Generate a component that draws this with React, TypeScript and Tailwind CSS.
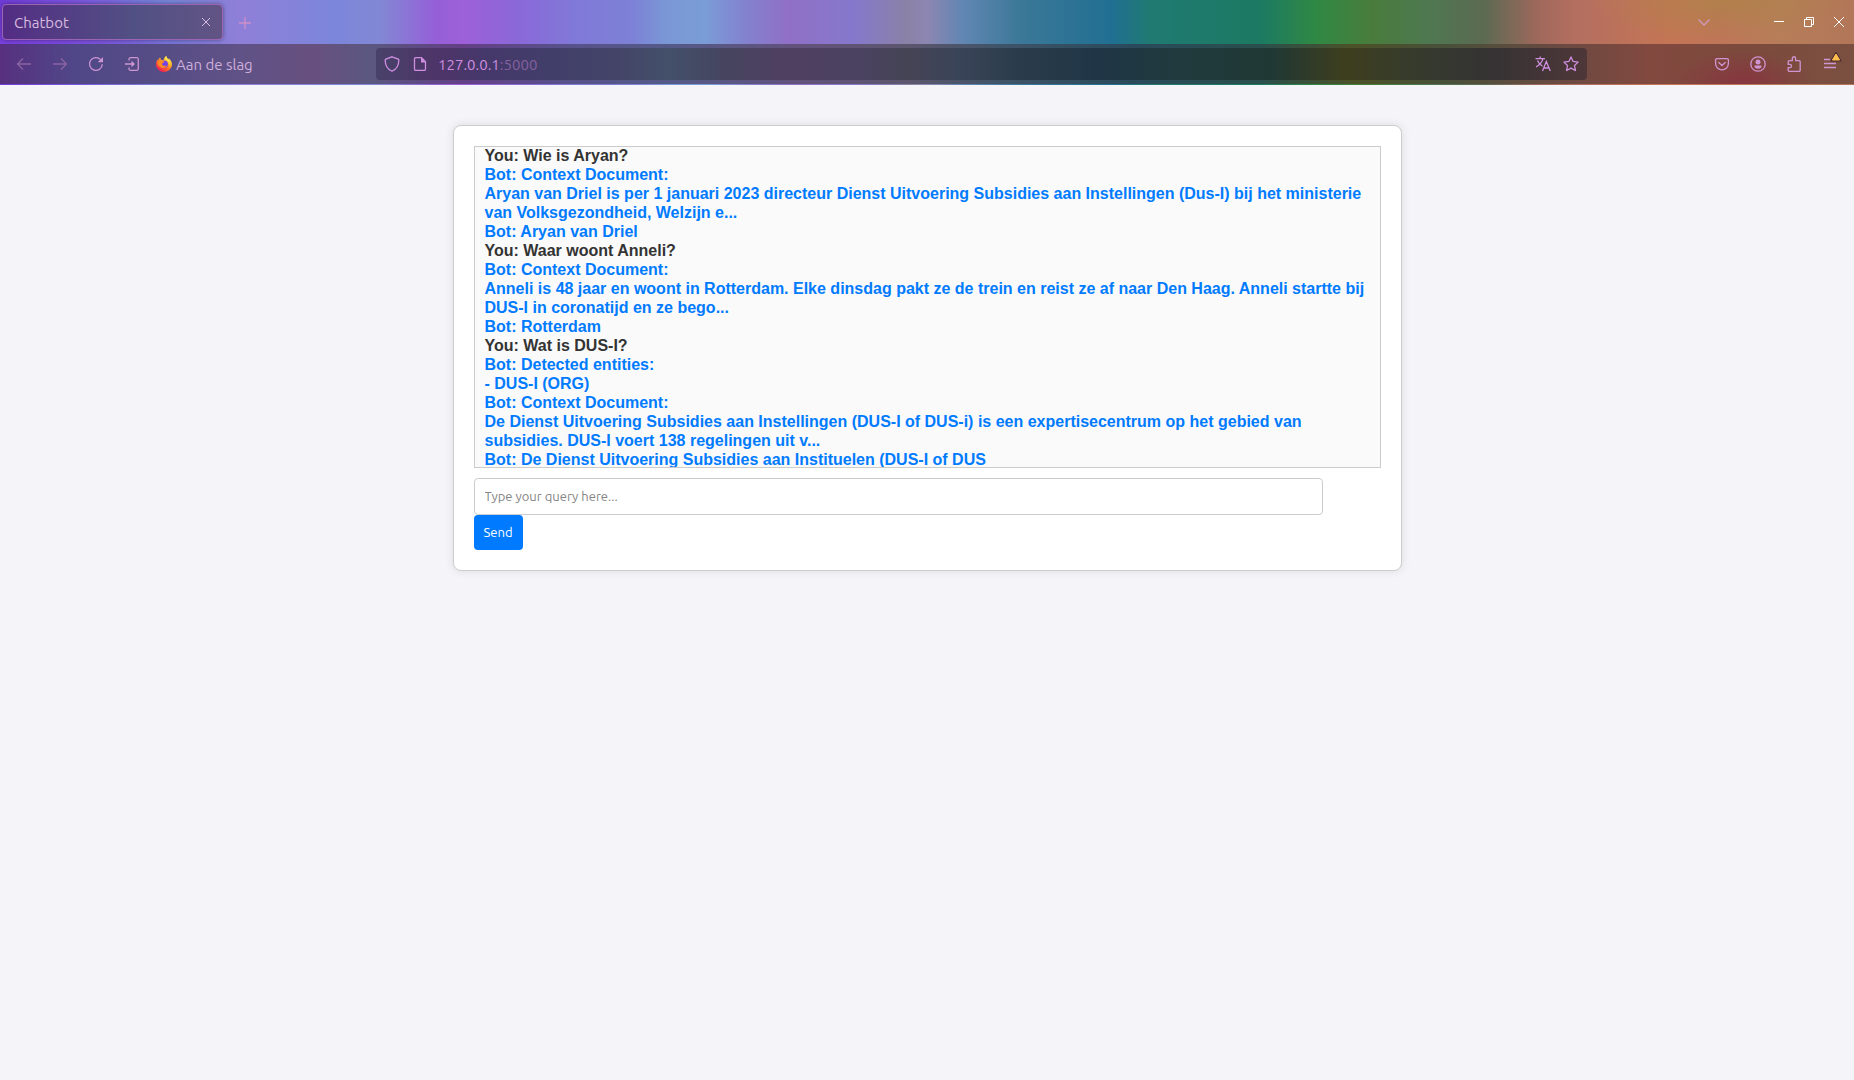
import { useState } from "react";
import type { ReactNode } from "react";

type Message = { from: "user" | "bot"; lines: string[] };

const messages: Message[] = [
  { from: "user", lines: ["You: Wie is Aryan?"] },
  {
    from: "bot",
    lines: [
      "Bot: Context Document:",
      "Aryan van Driel is per 1 januari 2023 directeur Dienst Uitvoering Subsidies aan Instellingen (Dus-I) bij het ministerie van Volksgezondheid, Welzijn e...",
    ],
  },
  { from: "bot", lines: ["Bot: Aryan van Driel"] },
  { from: "user", lines: ["You: Waar woont Anneli?"] },
  {
    from: "bot",
    lines: [
      "Bot: Context Document:",
      "Anneli is 48 jaar en woont in Rotterdam. Elke dinsdag pakt ze de trein en reist ze af naar Den Haag. Anneli startte bij DUS-I in coronatijd en ze bego...",
    ],
  },
  { from: "bot", lines: ["Bot: Rotterdam"] },
  { from: "user", lines: ["You: Wat is DUS-I?"] },
  { from: "bot", lines: ["Bot: Detected entities:", "- DUS-I (ORG)"] },
  {
    from: "bot",
    lines: [
      "Bot: Context Document:",
      "De Dienst Uitvoering Subsidies aan Instellingen (DUS-I of DUS-i) is een expertisecentrum op het gebied van subsidies. DUS-I voert 138 regelingen uit v...",
    ],
  },
  { from: "bot", lines: ["Bot: De Dienst Uitvoering Subsidies aan Instituelen (DUS-I of DUS"] },
];

function Icon({ children, className = "" }: { children: ReactNode; className?: string }) {
  return (
    <svg viewBox="0 0 16 16" fill="none" stroke="currentColor" strokeWidth="1.3" className={`size-4 shrink-0 ${className}`} aria-hidden="true">
      {children}
    </svg>
  );
}

function BarButton({ label, children, className = "w-9 text-[#cf95d2]" }: { label: string; children: ReactNode; className?: string }) {
  return (
    <button type="button" aria-label={label} className={`flex h-8 shrink-0 items-center justify-center ${className}`}>
      {children}
    </button>
  );
}

function FirefoxLogo() {
  return (
    <svg viewBox="0 0 16 16" className="size-4 shrink-0" aria-hidden="true">
      <defs>
        <linearGradient id="flame" x1="0.85" y1="0.05" x2="0.2" y2="0.95">
          <stop offset="0" stopColor="#fff44f" />
          <stop offset="0.35" stopColor="#ffb02a" />
          <stop offset="0.6" stopColor="#ff6a2a" />
          <stop offset="1" stopColor="#f0145c" />
        </linearGradient>
      </defs>
      <path d="M10.2 0c.3 1.600 1.200 2.300 2.300 3.400.2-.4.200-.8.100-1.200C14.600 3.500 16 6 16 8.500A7.900 7.500 0 0 1 8 16 7.900 7.600 0 0 1 0 8.400C0 6.500.8 4.600 1.800 3.300c0 .5.100.8.300 1.100C2.500 3 3.200 2 4.400 1.500c-.2 1.200.3 1.900.9 2.400h2.200C8 2.400 8.800.8 10.200 0z" fill="url(#flame)" />
      <circle cx="8.200" cy="8.300" r="3.700" fill="#7542e5" />
      <path d="M1.500 7c1-2.600 3.500-3 5.200-1.900l1.700.3c-.2 1.100-1.700 1.300-2.200 2.100-.3.900.2 1.900 1.400 2.300 1.300.4 2.200-.5 3.200-.2-.6 1.700-2.200 2.500-4 2.300C4.200 11.600 2 10 1.500 7z" fill="#ff8a24" />
      <path d="M10.200 0c.3 1.600 1.200 2.300 2.300 3.400 1.500 1.700 1.800 3.500 1.200 5.300-.4-2.400-1.700-3.900-3.700-4.700-1.400-.6-1.200-2.700.2-4z" fill="#ffe14b" />
    </svg>
  );
}

function TabStrip() {
  return (
    <div className="flex h-11 items-start bg-[radial-gradient(130px_45px_at_93%_0%,#ac8446bb,transparent),radial-gradient(200px_50px_at_2%_100%,#7f43e0aa,transparent)] pt-1 pl-0.5">
      <div className="flex h-9 w-[221px] items-center justify-between rounded border border-[#9b63b4] bg-linear-to-r from-[#532c84] via-[#515084] via-60% to-[#625485] pr-2 pl-[11px] text-[#d9bbdf] shadow-[0_0_4px_rgba(0,0,0,0.4)]">
        <span className="pt-0.5 text-[15px] leading-5">Chatbot</span>
        <button type="button" aria-label="Close tab" className="flex size-4 items-center justify-center">
          <Icon className="stroke-1">
            <path d="M4 4l8 8M12 4l-8 8" />
          </Icon>
        </button>
      </div>
      <BarButton label="New tab" className="mt-[3px] ml-1 w-9 text-[#cf8fc8]">
        <Icon>
          <path d="M2 8h12M8 2v12" />
        </Icon>
      </BarButton>
      <div className="mt-0.5 ml-auto flex">
        <BarButton label="List all tabs" className="mr-[42px] w-9 text-[#d19ac0]">
          <Icon>
            <path d="M2.500 5.500L8 11l5.500-5.500" />
          </Icon>
        </BarButton>
        <BarButton label="Minimize" className="w-[30px] text-white">
          <Icon className="stroke-1">
            <path d="M3 7.500h10" />
          </Icon>
        </BarButton>
        <BarButton label="Restore" className="w-[30px] text-white">
          <Icon className="stroke-1">
            <path d="M3.500 5.500h7v7h-7zM5.500 5.500v-2h7v7h-2" />
          </Icon>
        </BarButton>
        <BarButton label="Close window" className="w-[30px] text-white">
          <Icon className="stroke-1">
            <path d="M3 3l10 10M13 3L3 13" />
          </Icon>
        </BarButton>
      </div>
    </div>
  );
}

function Toolbar() {
  return (
    <div className="flex h-10 items-center bg-[radial-gradient(70px_34px_at_94%_100%,#8a3040cc,transparent),linear-gradient(90deg,#57307f_0%,#504788_4%,#554c86_8%,#605286_13%,#67507f_17%,#5b5880_20%,#5d4d82_22%,#643f86_25%,#58508a_30%,#545a88_36%,#62527c_43%,#5c566e_49%,#3f5468_54%,#2a4a5c_61%,#2a4f4c_68%,#4c5228_73%,#48503a_78%,#6a4a42_84%,#82493f_89%,#7c4a3d_94%,#7b5040_100%)]">
      <nav aria-label="Navigation" className="flex w-[376px] shrink-0 items-center pl-1.5">
        <BarButton label="Back" className="w-9 text-[#8a63a3]">
          <Icon>
            <path d="M15 8H1.500M7 2.500L1.500 8 7 13.500" />
          </Icon>
        </BarButton>
        <BarButton label="Forward" className="w-9 text-[#8a63a3]">
          <Icon>
            <path d="M1 8h13.500M9 2.500L14.500 8 9 13.500" />
          </Icon>
        </BarButton>
        <BarButton label="Reload">
          <Icon>
            <path d="M14.300 8.300A6.400 6.400 0 1 1 12.600 3.600" />
            <path d="M15 1v5.300H9.700z" fill="currentColor" stroke="none" />
          </Icon>
        </BarButton>
        <BarButton label="Import bookmarks">
          <Icon>
            <path d="M5 4.500V3.200A1.500 1.500 0 0 1 6.500 1.700h6.300a1.500 1.500 0 0 1 1.500 1.500v9.600a1.500 1.500 0 0 1-1.500 1.500H6.500A1.500 1.500 0 0 1 5 12.800v-1.300M1 8h8" />
            <path d="M7.500 4.800L11 8l-3.500 3.200z" fill="currentColor" stroke="none" />
          </Icon>
        </BarButton>
        <a href="#start" className="ml-1.5 flex items-center gap-1 text-[#cfaedb]">
          <FirefoxLogo />
          <span className="pt-0.5 text-[15px] leading-5">Aan de slag</span>
        </a>
      </nav>
      <div className="flex h-8 min-w-0 flex-1 items-center rounded bg-[linear-gradient(90deg,#48426a_0%,#4e3468_5%,#45386a_9%,#413f6a_15%,#444468_20%,#43506a_24%,#46445f_29%,#4f3f60_34%,#4a4260_40%,#454455_44%,#3a4458_48%,#2a3c4c_53%,#1f3545_60%,#203a3e_66%,#203834_74%,#3e3e1e_80%,#353b2d_86%,#353233_92%,#4f3739_100%)] text-[#cf8ee0]">
        <BarButton label="Tracking protection" className="w-8">
          <Icon>
            <path d="M8 .8l6.200 2.400c.4.200.6.500.6.900C14.800 9 12.500 13.500 8 15.200 3.500 13.500 1.200 9 1.200 4.100c0-.4.200-.7.600-.9z" />
          </Icon>
        </BarButton>
        <BarButton label="Site information" className="w-6">
          <Icon>
            <path d="M9.500 1.700H3.700a1.200 1.200 0 0 0-1.200 1.200v10.200a1.200 1.200 0 0 0 1.200 1.200h8.600a1.200 1.200 0 0 0 1.200-1.200V5.700z" />
            <path d="M9 1.500l5 5H9z" fill="currentColor" stroke="none" />
          </Icon>
        </BarButton>
        <span className="ml-1.5 flex-1 pt-0.5 text-[15px] leading-5">
          127.0.0.1<span className="text-[#8561a0]">:5000</span>
        </span>
        <BarButton label="Translate page" className="w-7">
          <Icon>
            <path d="M.5 2.600h9.500M5.200.5v2M8 2.700C7 6.500 4.500 9.200 1 11M2.500 4.500c1 2.500 2.800 4.500 5 5.800M7.500 15l3.800-9.500L15.300 15M9 12h5" />
          </Icon>
        </BarButton>
        <BarButton label="Bookmark this page" className="mr-0.5 w-7">
          <Icon>
            <path strokeLinejoin="round" d="M8 .9l2.100 4.500 5 .7-3.600 3.400.9 5L8 12.100l-4.400 2.400.9-5L.9 6.100l5-.7z" />
          </Icon>
        </BarButton>
      </div>
      <div className="flex w-[267px] shrink-0 justify-end pr-1.5">
        <BarButton label="Save to Pocket">
          <Icon>
            <path d="M3 2.600h10a1.400 1.400 0 0 1 1.400 1.400v3.500a6.400 6.400 0 0 1-12.800 0V4A1.400 1.400 0 0 1 3 2.600z" />
            <path d="M4.800 6.500L8 9.500l3.200-3" strokeLinecap="round" />
          </Icon>
        </BarButton>
        <BarButton label="Account">
          <Icon>
            <circle cx="8" cy="8" r="7.200" />
            <circle cx="8" cy="5.900" r="2.500" fill="currentColor" stroke="none" />
            <path d="M4.500 9.500h7V10a3.500 2.800 0 0 1-7 0z" fill="currentColor" stroke="none" />
          </Icon>
        </BarButton>
        <BarButton label="Extensions">
          <Icon>
            <path d="M6.300 4.700V2.400a1.600 1.600 0 0 1 3.300 0v2.300h3.500a1.100 1.100 0 0 1 1.100 1.100v8.400a1.100 1.100 0 0 1-1.100 1.100H3.300a1.100 1.100 0 0 1-1.100-1.100v-2.600h1.700a1.500 1.500 0 0 0 0-3.200H2.200V5.800a1.100 1.100 0 0 1 1.100-1.100z" />
          </Icon>
        </BarButton>
        <BarButton label="Open menu" className="relative w-9 text-[#cf95d2]">
          <Icon>
            <path d="M2 3.500h6M2 7.500h12M2 11.500h12" />
          </Icon>
          <svg viewBox="0 0 12 10" className="absolute top-1 right-1.5 h-2.5 w-3" aria-hidden="true">
            <path d="M6 .8L10.800 8.800H1.200z" fill="#ffbd4f" stroke="#4a2a2c" strokeWidth="1.500" strokeLinejoin="round" />
            <path d="M6 2L9.600 8H2.400z" fill="#ffbd4f" stroke="#ffbd4f" strokeLinejoin="round" />
          </svg>
        </BarButton>
      </div>
    </div>
  );
}

function Chat() {
  const [query, setQuery] = useState("");
  return (
    <main className="px-4 py-10">
      <div className="mx-auto w-full max-w-[949px] rounded-lg border border-[#ccc] bg-white p-5 shadow-[0_0_10px_rgba(0,0,0,0.1)]">
        <div
          role="log"
          className="mb-2.5 flex h-[322px] flex-col justify-center overflow-hidden border border-[#ccc] bg-[#fafafa] px-2.5 font-['Liberation_Sans',Arial,sans-serif] text-base leading-[19px] font-bold"
        >
          {messages.map((message, index) => (
            <div key={index} className={message.from === "user" ? "shrink-0 text-[#333]" : "shrink-0 text-[#007bff]"}>
              {message.lines.map((line) => (
                <p key={line}>{line}</p>
              ))}
            </div>
          ))}
        </div>
        <form className="flex flex-col items-start text-[13px] leading-[15px]" onSubmit={(event) => event.preventDefault()}>
          <input
            type="text"
            aria-label="Query"
            placeholder="Type your query here..."
            value={query}
            onChange={(event) => setQuery(event.target.value)}
            className="h-[37px] w-[calc(100%-58px)] rounded border border-[#ccc] bg-white px-2.5 pb-0.5 text-[#333] placeholder:text-[#858585]"
          />
          <button type="submit" className="rounded bg-[#007bff] px-2.5 py-2.5 text-white">
            Send
          </button>
        </form>
      </div>
    </main>
  );
}

export default function App() {
  return (
    <div className="min-h-screen bg-[#f4f4f9] font-['Ubuntu','Noto_Sans',sans-serif]">
      <header className="bg-[linear-gradient(90deg,#6f3bd8_0%,#7a56dc_4%,#7684d8_9%,#8f7fd8_13%,#7b86da_18%,#8288d4_20.5%,#955fd8_23.5%,#9d60d8_25%,#8a68d8_28%,#8079d8_31%,#7d80d6_34%,#7a98d6_36%,#7a9dd6_38%,#8284d0_40%,#9070c6_42.5%,#8578cc_46%,#8a82a6_49%,#8d86b2_50%,#6086b2_52%,#3c7898_55%,#206f92_60%,#207a72_62%,#1c7a62_68%,#2f8843_71%,#497c3c_74%,#4e7850_77%,#5b6a52_80%,#a0685c_83%,#b46f60_85%,#c47555_90%,#c0755a_93%,#b77d5a_96%,#b27658_100%)] pb-px">
        <TabStrip />
        <Toolbar />
      </header>
      <Chat />
    </div>
  );
}
